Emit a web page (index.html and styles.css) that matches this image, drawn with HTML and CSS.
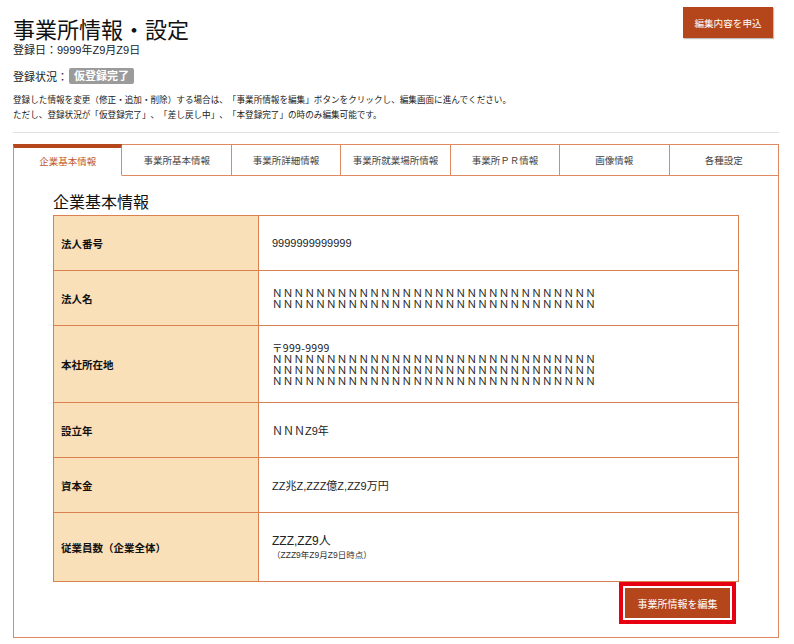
FILE: index.html
```html
<!DOCTYPE html>
<html lang="ja">
<head>
<meta charset="utf-8">
<title>事業所情報・設定</title>
<link rel="stylesheet" href="styles.css">
</head>
<body>
<div class="page">
  <header class="header">
    <div class="header-main">
      <h1 class="title">事業所情報・設定</h1>
      <p class="reg-date">登録日：9999年Z9月Z9日</p>
      <div class="status">
        <span class="status-label">登録状況：</span>
        <span class="badge">仮登録完了</span>
      </div>
      <p class="desc">登録した情報を変更（修正・追加・削除）する場合は、「事業所情報を編集」ボタンをクリックし、編集画面に進んでください。<br>ただし、登録状況が「仮登録完了」、「差し戻し中」、「本登録完了」の時のみ編集可能です。</p>
    </div>
    <button class="btn btn-apply">編集内容を申込</button>
  </header>
  <hr class="rule">
  <section class="tabbox">
    <nav class="tabs">
      <div class="tab active">企業基本情報</div>
      <div class="tab">事業所基本情報</div>
      <div class="tab">事業所詳細情報</div>
      <div class="tab">事業所就業場所情報</div>
      <div class="tab">事業所ＰＲ情報</div>
      <div class="tab">画像情報</div>
      <div class="tab">各種設定</div>
    </nav>
    <div class="panel">
      <h2 class="panel-title">企業基本情報</h2>
      <table class="info">
        <tr>
          <th>法人番号</th>
          <td>9999999999999</td>
        </tr>
        <tr>
          <th>法人名</th>
          <td><div class="nn">ＮＮＮＮＮＮＮＮＮＮＮＮＮＮＮＮＮＮＮＮＮＮＮＮＮＮＮＮＮＮ<br>ＮＮＮＮＮＮＮＮＮＮＮＮＮＮＮＮＮＮＮＮＮＮＮＮＮＮＮＮＮＮ</div></td>
        </tr>
        <tr>
          <th>本社所在地</th>
          <td class="addr"><div class="nn">〒999-9999<br>ＮＮＮＮＮＮＮＮＮＮＮＮＮＮＮＮＮＮＮＮＮＮＮＮＮＮＮＮＮＮ<br>ＮＮＮＮＮＮＮＮＮＮＮＮＮＮＮＮＮＮＮＮＮＮＮＮＮＮＮＮＮＮ<br>ＮＮＮＮＮＮＮＮＮＮＮＮＮＮＮＮＮＮＮＮＮＮＮＮＮＮＮＮＮＮ</div></td>
        </tr>
        <tr>
          <th>設立年</th>
          <td>ＮＮＮZ9年</td>
        </tr>
        <tr>
          <th>資本金</th>
          <td>ZZ兆Z,ZZZ億Z,ZZ9万円</td>
        </tr>
        <tr class="row-last">
          <th>従業員数（企業全体）</th>
          <td><div class="emp">ZZZ,ZZ9人</div><div class="emp-note">（ZZZ9年Z9月Z9日時点）</div></td>
        </tr>
      </table>
      <div class="actions">
        <button class="btn btn-edit">事業所情報を編集</button>
      </div>
    </div>
  </section>
</div>
</body>
</html>
```

FILE: styles.css
```css
* { box-sizing: border-box; }
html, body { margin: 0; padding: 0; background: #fff; }
body {
  font-family: "Liberation Sans", "Noto Sans CJK JP", sans-serif;
  color: #222;
  text-spacing-trim: space-all;
}
.page {
  width: 766px;
  margin-left: 13px;
  padding-top: 7px;
}
.header {
  display: flex;
  justify-content: space-between;
  align-items: flex-start;
}
.title {
  margin: 6px 0 0;
  font-size: 22px;
  line-height: 30px;
  font-weight: normal;
  color: #111;
  font-family: "Noto Sans CJK JP", sans-serif;
}
.reg-date {
  margin: 0;
  font-size: 11px;
  line-height: 14px;
}
.status {
  margin-top: 10px;
  height: 18px;
  display: flex;
  align-items: center;
  font-size: 11px;
}
.badge {
  margin-left: 1px;
  height: 16px;
  line-height: 16px;
  padding: 0 5px;
  background: #9b9b9b;
  color: #fff;
  font-weight: bold;
  border-radius: 2px;
}
.desc {
  margin: 8px 0 0;
  font-size: 8.6px;
  line-height: 15px;
}
.btn {
  border: none;
  color: #fff;
  background: #b5451b;
  font-family: "Noto Sans CJK JP", sans-serif;
  cursor: pointer;
}
.btn-apply {
  width: 90px;
  height: 31px;
  margin-right: 6px;
  font-size: 9.6px;
  box-shadow: 1px 1px 1px rgba(0,0,0,0.25);
}
.rule {
  margin: 9px 0 0;
  border: none;
  border-top: 1px solid #e2e2e2;
  height: 0;
}
.tabbox {
  margin-top: 11px;
  border: 1px solid #dd8a62;
  border-top: none;
}
.tabs {
  display: grid;
  grid-template-columns: repeat(7, 1fr);
  margin: 0 -1px;
}
.tab {
  height: 32px;
  display: flex;
  align-items: center;
  justify-content: center;
  font-size: 9.5px;
  color: #444;
  font-family: "Noto Sans CJK JP", sans-serif;
  border-top: 1px solid #dd8a62;
  border-right: 1px solid #dd8a62;
  border-bottom: 1px solid #dd8a62;
}
.tab:first-child { border-left: 1px solid #dd8a62; }
.tab.active {
  border-top: 4px solid #b5451b;
  border-bottom-color: transparent;
  color: #c0572b;
  padding-bottom: 2px;
}
.panel {
  padding: 0 38px 19px 39px;
}
.panel-title {
  margin: 15px 0 4px;
  font-size: 16px;
  line-height: 20px;
  font-weight: normal;
  color: #111;
  font-family: "Noto Sans CJK JP", sans-serif;
}
.info {
  width: 686px;
  border-collapse: collapse;
  border: 1px solid #d98150;
}
.info th, .info td {
  border: 1px solid #d98150;
  vertical-align: middle;
  text-align: left;
  height: 55px;
}
.info th {
  width: 205px;
  background: #fae0b9;
  font-size: 10.5px;
  font-weight: bold;
  color: #111;
  padding: 0 7px;
  font-family: "Noto Sans CJK JP", sans-serif;
}
.info td {
  font-size: 11px;
  padding: 10px 13px;
  color: #222;
}
.nn {
  font-size: 10.5px;
  line-height: 11px;
  font-family: "Noto Sans CJK JP", sans-serif;
  letter-spacing: 0.3px;
}
.info td.addr { height: 77px; }
.row-last td, .row-last th { height: 69px; }
.emp {
  font-size: 12px;
  line-height: 16px;
}
.emp-note {
  font-size: 8.5px;
  line-height: 12px;
  color: #333;
}
.actions {
  display: flex;
  justify-content: flex-end;
  padding-right: 10px;
  margin-top: 6px;
}
.btn-edit {
  width: 105px;
  height: 30px;
  font-size: 10px;
  outline: 4px solid #e60012;
  outline-offset: 2px;
}
```
